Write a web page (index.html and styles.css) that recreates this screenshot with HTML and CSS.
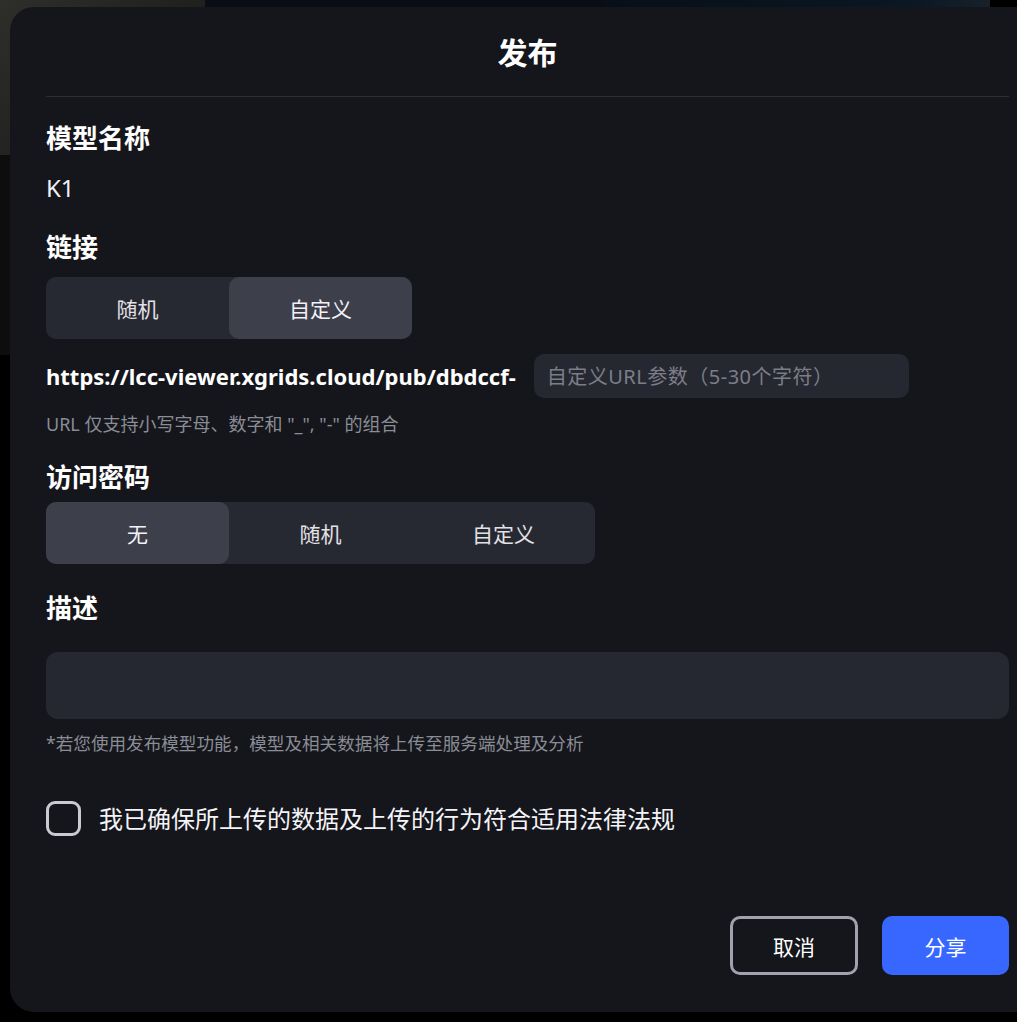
FILE: index.html
```html
<!DOCTYPE html>
<html lang="zh-CN">
<head>
  <meta charset="UTF-8" />
  <meta name="viewport" content="width=device-width, initial-scale=1.0"/>
  <title>发布</title>
  <link rel="stylesheet" href="styles.css">
</head>
<body>

  <div class="backdrop">
    <div class="bg-photo"></div>
    <div class="bg-dark"></div>
    <div class="bg-navy"></div>
    <div class="bg-blue"></div>
  </div>

  <div class="modal">
    <header class="modal-header">
      <h2>发布</h2>
    </header>

    <div class="modal-body">
      <div class="label">模型名称</div>
      <div class="value">K1</div>

      <div class="label label-link">链接</div>
      <div class="segmented seg-link">
        <div class="seg">随机</div>
        <div class="seg active">自定义</div>
      </div>

      <div class="url-row">
        <span class="url-base">https://lcc-viewer.xgrids.cloud/pub/dbdccf-</span>
        <input class="url-input" type="text" placeholder="自定义URL参数（5-30个字符）" />
      </div>
      <div class="hint">URL 仅支持小写字母、数字和 "_", "-" 的组合</div>

      <div class="label label-pwd">访问密码</div>
      <div class="segmented seg-pwd">
        <div class="seg active">无</div>
        <div class="seg">随机</div>
        <div class="seg">自定义</div>
      </div>

      <div class="label label-desc">描述</div>
      <textarea class="desc"></textarea>
      <div class="hint note">*若您使用发布模型功能，模型及相关数据将上传至服务端处理及分析</div>

      <label class="agree">
        <span class="checkbox"></span>
        <span>我已确保所上传的数据及上传的行为符合适用法律法规</span>
      </label>
    </div>

    <div class="modal-footer">
      <button class="btn btn-cancel">取消</button>
      <button class="btn btn-primary">分享</button>
    </div>
  </div>

</body>
</html>
```

FILE: styles.css
```css
* {
  box-sizing: border-box;
}

body {
  margin: 0;
  padding: 7px 0 0 10px;
  background: #000;
  font-family: "Noto Sans", "Noto Sans CJK SC", sans-serif;
  color: #fff;
  overflow: hidden;
  height: 1022px;
}

/* scene behind the dialog */
.backdrop {
  position: absolute;
  inset: 0;
  z-index: 0;
}

.bg-photo {
  position: absolute;
  left: 0;
  top: 0;
  width: 205px;
  height: 155px;
  background: linear-gradient(135deg, #2e2e2b, #1f1f1d 60%, #282826);
}

.bg-dark {
  position: absolute;
  left: 0;
  top: 155px;
  width: 205px;
  height: 200px;
  background: #0d0d0d;
}

.bg-navy {
  position: absolute;
  left: 205px;
  top: 0;
  width: 400px;
  height: 10px;
  background: #0a0d14;
}

.bg-blue {
  position: absolute;
  left: 605px;
  top: 0;
  width: 385px;
  height: 10px;
  background: linear-gradient(to right, #070f18, #0a1724 80%, #18212a);
}

.modal {
  position: relative;
  z-index: 1;
  width: 1035px;
  background: #15161b;
  border-radius: 24px;
  padding: 0 36px 37px;
}

.modal-header {
  padding: 26px 0 23px;
  border-bottom: 1px solid #2d2e34;
  text-align: center;
}

.modal-header h2 {
  margin: 0;
  font-size: 30px;
  line-height: 40px;
  font-weight: 700;
}

.modal-body {
  padding-top: 25px;
}

.label {
  font-size: 26px;
  line-height: 32px;
  font-weight: 700;
}

.value {
  margin-top: 19px;
  font-size: 24px;
  line-height: 30px;
  color: #f0f0f4;
}

.label-link {
  margin-top: 28px;
}

.label-pwd {
  margin-top: 25px;
}

.label-desc {
  margin-top: 28px;
}

.segmented {
  display: flex;
  width: max-content;
  background: #272932;
  border-radius: 10px;
}

.seg-link {
  margin-top: 14px;
}

.seg-pwd {
  margin-top: 9px;
}

.seg {
  width: 183px;
  height: 62px;
  display: flex;
  align-items: center;
  justify-content: center;
  font-size: 21px;
  color: #e2e2e8;
  border-radius: 10px;
}

.seg.active {
  background: #3d3f4b;
  color: #f2f2f6;
}

.url-row {
  margin-top: 15px;
  display: flex;
  align-items: center;
  gap: 18px;
  height: 44px;
}

.url-base {
  font-size: 22px;
  font-weight: 700;
  white-space: nowrap;
}

.url-input {
  width: 375px;
  height: 44px;
  border: none;
  outline: none;
  border-radius: 10px;
  background: #262831;
  padding: 0 13px;
  font-family: inherit;
  font-size: 20px;
  letter-spacing: 0.5px;
  color: #fff;
}

.url-input::placeholder {
  color: #7c7e87;
}

.hint {
  margin-top: 14px;
  font-size: 18px;
  line-height: 24px;
  color: #8a8c96;
}

.desc {
  display: block;
  width: 100%;
  height: 67px;
  margin-top: 28px;
  border: none;
  outline: none;
  resize: none;
  border-radius: 12px;
  background: #262831;
}

.note {
  margin-top: 12px;
  font-size: 17.6px;
}

.agree {
  margin-top: 46px;
  display: flex;
  align-items: center;
  gap: 18px;
  font-size: 24px;
  line-height: 35px;
  color: #f4f4f8;
}

.checkbox {
  width: 35px;
  height: 35px;
  border: 3px solid #c9cad2;
  border-radius: 9px;
}

.modal-footer {
  margin-top: 80px;
  display: flex;
  justify-content: flex-end;
  gap: 24px;
}

.btn {
  height: 59px;
  width: 127px;
  border-radius: 10px;
  font-family: inherit;
  font-size: 21px;
  color: #fff;
  cursor: pointer;
}

.btn-cancel {
  width: 128px;
  background: transparent;
  border: 3px solid #a1a2ae;
}

.btn-primary {
  background: #3767ff;
  border: none;
}
```
